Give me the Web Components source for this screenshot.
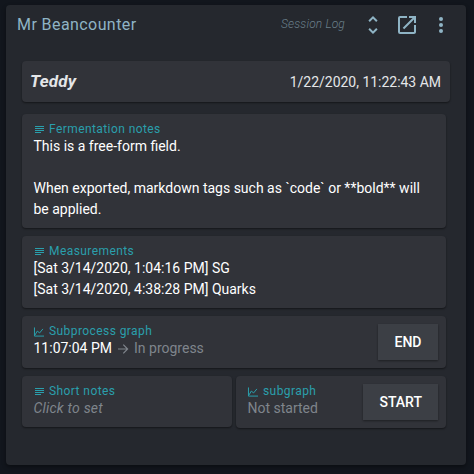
<!DOCTYPE html>
<html lang="en"><head><meta charset="utf-8"><title>Session Log</title>
<style>
html,body{margin:0;height:100%}
body{background:#12161d;font-family:Roboto,sans-serif;color:#fff;overflow:hidden}
</style></head><body>
<session-widget>
  <widget-bar slot="bar" heading="Mr Beancounter" kind="Session Log"></widget-bar>
  <session-head name="Teddy" date="1/22/2020, 11:22:43 AM"></session-head>
  <log-grid>
    <note-card class="wide" icon="text" label="Fermentation notes" style="--h:114px">This is a free-form field.

When exported, markdown tags such as `code` or **bold** will be applied.</note-card>
    <note-card class="wide" icon="text" label="Measurements" style="--h:72px">[Sat 3/14/2020, 1:04:16 PM] SG
[Sat 3/14/2020, 4:38:28 PM] Quarks</note-card>
    <note-card class="wide" icon="graph" label="Subprocess graph" style="--h:52px">11:07:04 PM<progress-state>In progress</progress-state><flat-button slot="action">END</flat-button></note-card>
    <note-card icon="text" label="Short notes" style="--h:51px"><faded-text italic>Click to set</faded-text></note-card>
    <note-card icon="graph" label="subgraph" style="--h:52px"><faded-text>Not started</faded-text><flat-button slot="action">START</flat-button></note-card>
  </log-grid>
</session-widget>
<script>
const define = (name, render) => customElements.define(name, class extends HTMLElement {
  constructor() {
    super();
    this.attachShadow({mode: 'open'});
  }
  connectedCallback() {
    this.shadowRoot.innerHTML = render(this);
  }
});
const icons = {
  text: '<svg viewBox="0 0 10 10" width="10" height="10" fill="currentColor"><path d="M1 1h9v1H1zM1 3h9v1H1zM1 5h9v1H1zM1 7h6v1H1z"/></svg>',
  graph: '<svg viewBox="0 0 11 10" width="11" height="10" fill="none" stroke="currentColor"><path d="M.5 0v9.5H11M1 8.4 3.6 4l2.6 2L9.8 1.6" stroke-width="1.1"/></svg>'
};
define('session-widget', () => `<style>
:host{display:block;box-sizing:border-box;width:460px;height:460px;margin:5px 0 0 6px;background:#25282e;border-radius:4px;box-shadow:0 2px 4px #0006;float:left}
main{padding:16px}
</style><slot name="bar"></slot><main><slot></slot></main>`);
define('widget-bar', e => `<style>
:host{display:flex;height:40px;align-items:center;color:#8fb4c5}
h1{flex:1;margin:0 0 0 11px;font:400 16px/20px Roboto,sans-serif;letter-spacing:.42px}
i{font-size:12px;font-weight:300;line-height:16px;letter-spacing:.15px;color:#6a7f8a;margin:-2px 16px 0 0}
svg{display:block;fill:currentColor}
.expand{margin-right:10px}.open{margin-right:10px}.more{margin-right:13px}
</style><h1>${e.getAttribute('heading')}</h1><i>${e.getAttribute('kind')}</i>
<svg class="expand" width="24" height="24" viewBox="0 0 24 24"><path d="M12 5.83 15.17 9l1.41-1.41L12 3 7.41 7.59 8.83 9zM12 18.17 8.83 15l-1.41 1.41L12 21l4.59-4.59L15.17 15z"/></svg>
<svg class="open" width="24" height="24" viewBox="0 0 24 24"><path d="M19 19H5V5h7V3H5a2 2 0 0 0-2 2v14a2 2 0 0 0 2 2h14c1.1 0 2-.9 2-2v-7h-2zM14 3v2h3.59l-9.83 9.83 1.41 1.41L19 6.41V10h2V3z"/></svg>
<svg class="more" width="24" height="24" viewBox="0 0 24 24"><circle cx="12" cy="6" r="2"/><circle cx="12" cy="12" r="2"/><circle cx="12" cy="18" r="2"/></svg>`);
define('session-head', e => `<style>
:host{display:flex;box-sizing:border-box;height:41px;align-items:center;justify-content:space-between;padding:0 9px 0 8px;background:#313339;border-radius:4px;box-shadow:0 1px 2px #0007;color:#e4e6e8}
b{font-size:17px;font-style:italic;line-height:20px;padding-bottom:2px;letter-spacing:.2px}
span{font-size:14px;line-height:20px;letter-spacing:-.02px}
</style><b>${e.getAttribute('name')}</b><span>${e.getAttribute('date')}</span>`);
define('log-grid', () => `<style>
:host{display:grid;grid-template-columns:210px 210px;column-gap:4px;row-gap:8px;margin-top:12px;align-items:start}
::slotted(.wide){grid-column:1/-1}
</style><slot></slot>`);
define('note-card', e => `<style>
:host{display:flex;box-sizing:border-box;height:var(--h);padding:8px 8px 0 12px;background:#313339;border-radius:4px;box-shadow:0 1px 2px #0007}
.body{flex:1;min-width:0}
.label{display:flex;align-items:center;height:14px;gap:5px;color:#2a9fac;font-size:12px;line-height:14px;letter-spacing:.42px}
svg{width:10px;flex:none;margin-top:2px;overflow:visible}
.text{font-size:14px;line-height:21px;white-space:pre-line;margin-left:-.5px}
</style><div class="body"><div class="label">${icons[e.getAttribute('icon')]}<span>${e.getAttribute('label')}</span></div><div class="text"><slot></slot></div></div><slot name="action"></slot>`);
define('progress-state', () => `<style>
:host{color:#7f858c;margin-left:5px}
svg{vertical-align:-2px;margin-right:5px}
</style><svg width="12" height="12" viewBox="0 0 12 12" fill="none" stroke="currentColor" stroke-width="1.2"><path d="M1 6h9.4M6.3 1.7 10.6 6l-4.3 4.3"/></svg><slot></slot>`);
define('faded-text', () => `<style>
:host{color:#7f858c}:host([italic]){font-style:italic;letter-spacing:.2px}
</style><slot></slot>`);
define('flat-button', () => `<style>
:host{display:block;box-sizing:border-box;height:36px;min-width:60px;text-align:center;padding:0 16px;background:#3c3f45;box-shadow:0 1px 2px #0006;font-size:14px;font-weight:500;line-height:36px}
</style><slot></slot>`);
</script></body></html>
